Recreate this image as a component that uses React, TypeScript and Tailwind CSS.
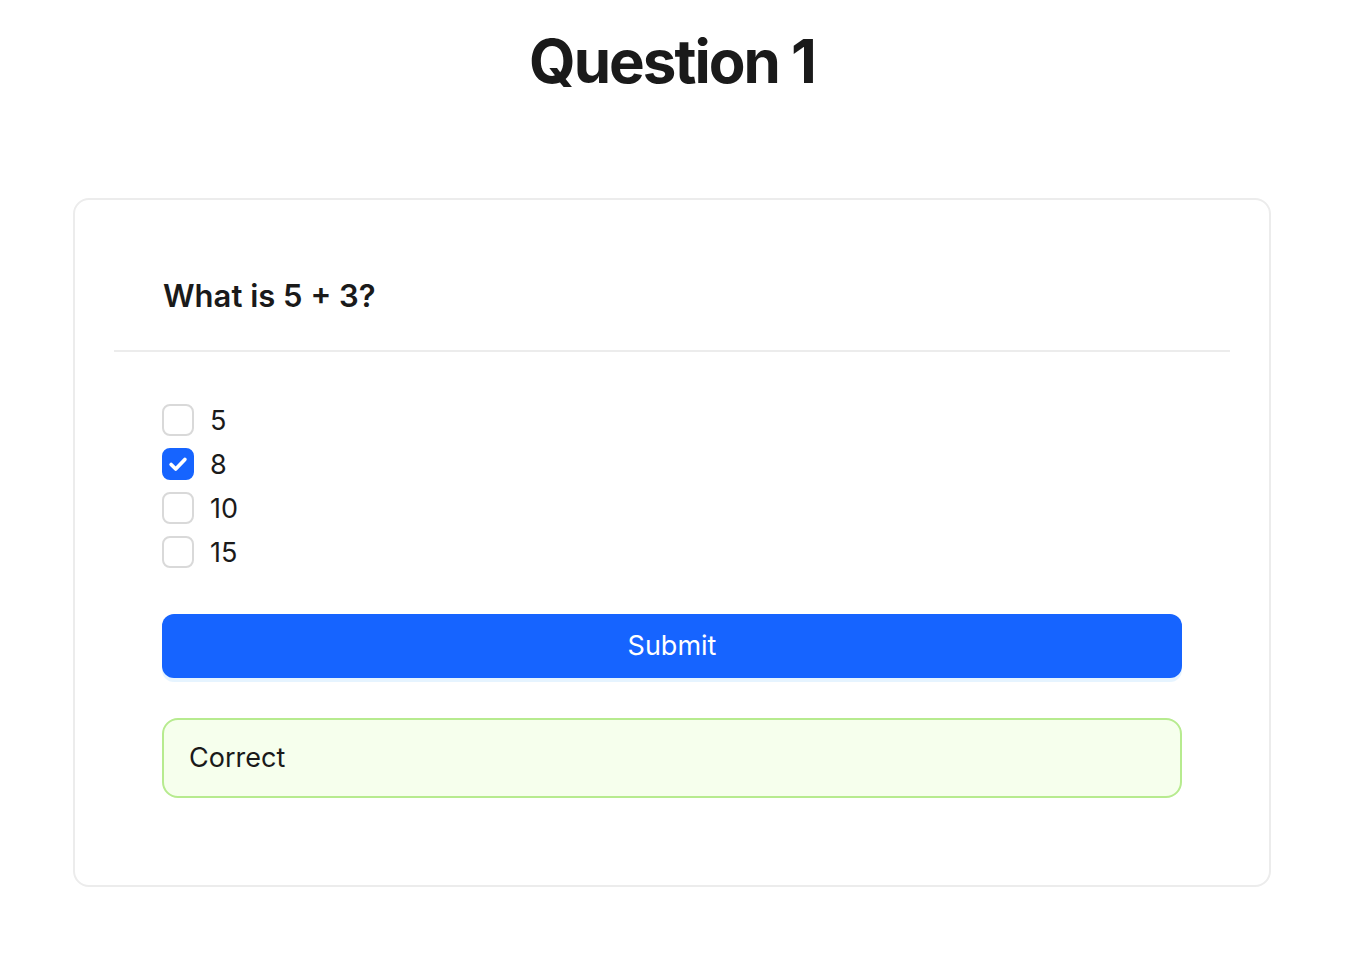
import React, { useState } from 'react';

const options = [5, 8, 10, 15];

function Check({ checked }: { checked: boolean }) {
  return (
    <span
      className={
        checked
          ? 'flex h-8 w-8 items-center justify-center rounded-lg border-2 border-[#1664ff] bg-[#1664ff]'
          : 'flex h-8 w-8 items-center justify-center rounded-lg border-2 border-[#d9d9d9] bg-white'
      }
    >
      {checked && (
        <svg viewBox="0 0 24 24" className="h-[22px] w-[22px]" fill="none" stroke="white" strokeWidth={4} strokeLinecap="round" strokeLinejoin="round">
          <path d="M4.5 12.5l5 5L19.5 7" />
        </svg>
      )}
    </span>
  );
}

export default function App() {
  const [selected, setSelected] = useState<number>(8);

  return (
    <div className="min-h-screen bg-white text-[#1a1a1a]" style={{ fontFamily: 'Inter, "Noto Sans", sans-serif' }}>
      <div className="w-[1344px]">
        <h1 className="pt-[22px] text-center text-[60px] font-bold leading-[78px] tracking-[-0.033em]">Question 1</h1>

        <div className="ml-[73px] mt-[98px] w-[1198px] rounded-2xl border-2 border-[#ececec] px-[39px] pb-[39px] pt-[38px]">
          <div className="flex h-[114px] items-center border-b-2 border-[#ececec] px-[49px] pt-1">
            <h2 className="text-[31px] font-semibold">What is 5 + 3?</h2>
          </div>

          <div className="px-[48px] pt-[46px] pb-[48px]">
            <div className="flex flex-col">
              {options.map((o) => (
                <label key={o} className="flex h-[44px] cursor-pointer items-center gap-4" onClick={() => setSelected(o)}>
                  <Check checked={selected === o} />
                  <span className="pt-0.5 text-[27px]">{o}</span>
                </label>
              ))}
            </div>

            <button className="mt-10 h-16 w-full rounded-xl bg-[#1664ff] text-[27px] text-white shadow-[0_4px_0_rgba(5,145,255,0.1)]">
              Submit
            </button>

            <div className="mt-10 flex h-20 items-center rounded-2xl border-2 border-[#b7eb8f] bg-[#f6ffed] px-[25px] text-[27px]">
              Correct
            </div>
          </div>
        </div>
      </div>
    </div>
  );
}
